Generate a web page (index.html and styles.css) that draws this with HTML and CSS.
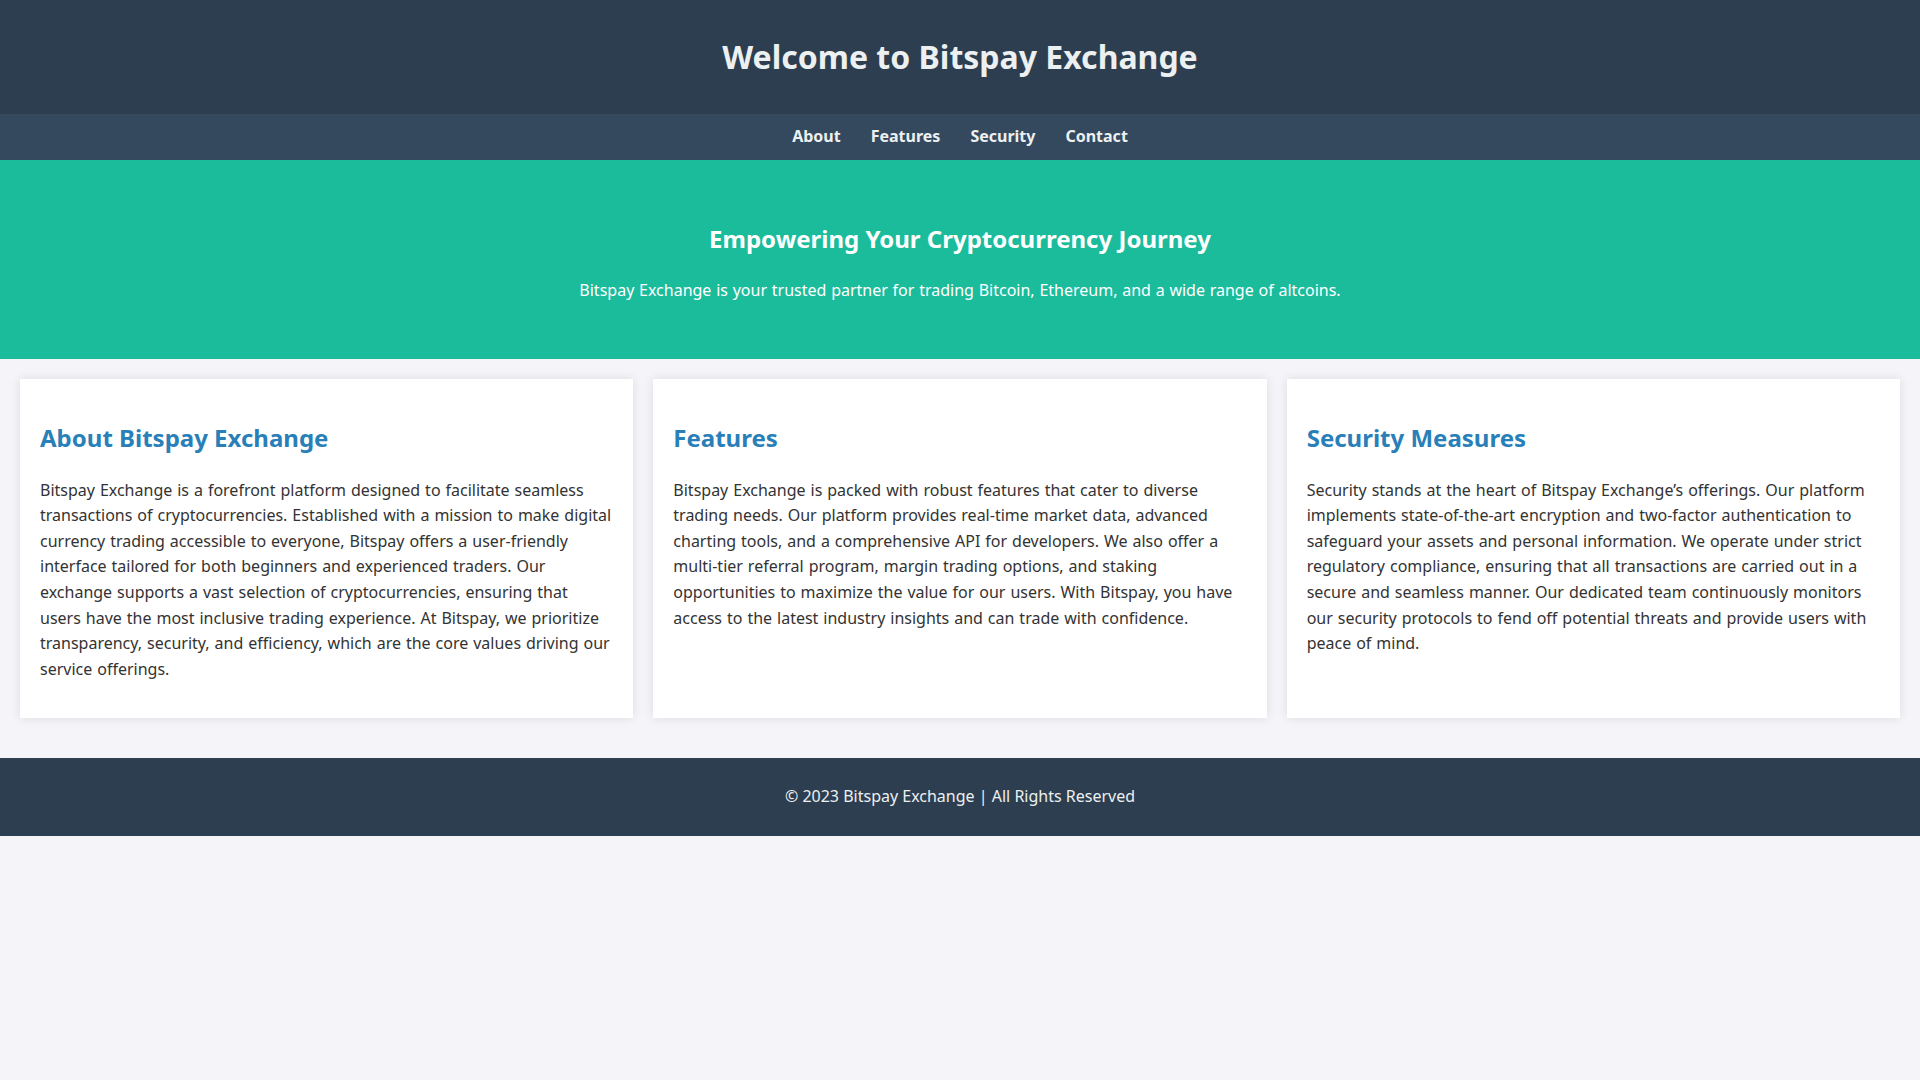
FILE: index.html
```html
<!DOCTYPE html>
<html lang="en">
<head>
  <meta charset="UTF-8">
  <title>Bitspay Exchange</title>
  <link rel="stylesheet" href="styles.css">
</head>
<body>
  <header class="site-header">
    <h1>Welcome to Bitspay Exchange</h1>
  </header>
  <nav class="site-nav">
    <a href="#about">About</a>
    <a href="#features">Features</a>
    <a href="#security">Security</a>
    <a href="#contact">Contact</a>
  </nav>
  <section class="hero">
    <h2>Empowering Your Cryptocurrency Journey</h2>
    <p>Bitspay Exchange is your trusted partner for trading Bitcoin, Ethereum, and a wide range of altcoins.</p>
  </section>
  <div class="container">
    <div class="card" id="about">
      <h2>About Bitspay Exchange</h2>
      <p>Bitspay Exchange is a forefront platform designed to facilitate seamless transactions of cryptocurrencies. Established with a mission to make digital currency trading accessible to everyone, Bitspay offers a user-friendly interface tailored for both beginners and experienced traders. Our exchange supports a vast selection of cryptocurrencies, ensuring that users have the most inclusive trading experience. At Bitspay, we prioritize transparency, security, and efficiency, which are the core values driving our service offerings.</p>
    </div>
    <div class="card" id="features">
      <h2>Features</h2>
      <p>Bitspay Exchange is packed with robust features that cater to diverse trading needs. Our platform provides real-time market data, advanced charting tools, and a comprehensive API for developers. We also offer a multi-tier referral program, margin trading options, and staking opportunities to maximize the value for our users. With Bitspay, you have access to the latest industry insights and can trade with confidence.</p>
    </div>
    <div class="card" id="security">
      <h2>Security Measures</h2>
      <p>Security stands at the heart of Bitspay Exchange’s offerings. Our platform implements state-of-the-art encryption and two-factor authentication to safeguard your assets and personal information. We operate under strict regulatory compliance, ensuring that all transactions are carried out in a secure and seamless manner. Our dedicated team continuously monitors our security protocols to fend off potential threats and provide users with peace of mind.</p>
    </div>
  </div>
  <footer class="site-footer" id="contact">
    <p>&copy; 2023 Bitspay Exchange | All Rights Reserved</p>
  </footer>
</body>
</html>
```

FILE: styles.css
```css
body{
  margin: 0;
  padding: 0;
  font-family: "Noto Sans", "Open Sans", sans-serif;
  line-height: 1.6;
  background: #f4f4f9;
  color: #333333;
}
.site-header{
  background: #2c3e50;
  color: #ecf0f1;
  text-align: center;
  padding: 10px 0;
}
.site-header h1{
  font-size: 32px;
  margin: 21.44px 0;
}
.site-nav{
  display: flex;
  justify-content: center;
  background: #34495e;
  padding: 10px 0;
}
.site-nav a{
  color: #ecf0f1;
  text-decoration: none;
  font-weight: bold;
  margin: 0 15px;
}
.hero{
  background: #1abc9c;
  color: #ffffff;
  text-align: center;
  padding: 40px 20px;
}
.hero h2{
  font-size: 24px;
  margin: 19.92px 0;
}
.hero p{
  margin: 16px 0;
  word-spacing: 0.6px;
}
.container{
  display: flex;
  gap: 20px;
  padding: 20px;
}
.card{
  flex: 1;
  background: #ffffff;
  padding: 20px;
  box-shadow: 0 0 10px rgba(0,0,0,0.1);
}
.card h2{
  color: #2980b9;
  font-size: 24px;
  margin: 19.92px 0;
}
.card p{
  margin: 16px 0;
  word-spacing: 0.8px;
}
.site-footer{
  background: #2c3e50;
  color: #ecf0f1;
  text-align: center;
  padding: 10px 0;
  margin-top: 20px;
}
.site-footer p{
  margin: 16px 0;
}
```
